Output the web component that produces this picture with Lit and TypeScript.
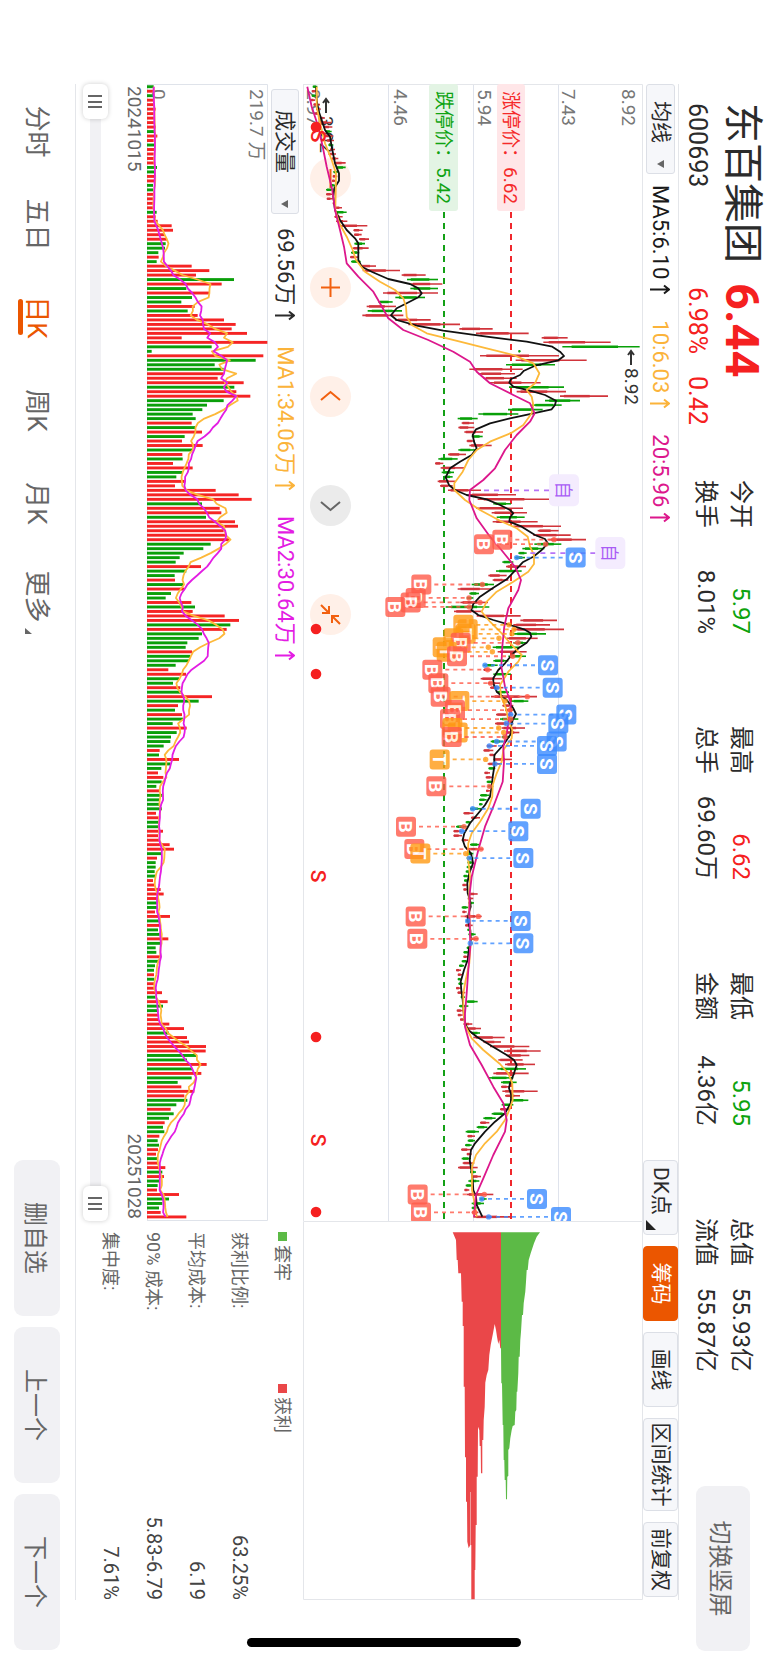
import { LitElement, html, svg, css } from "lit";
import { customElement, state } from "lit/decorators.js";

/* Daily candles: direction (r = up, g = down), low and high in chart thirds. */
const CANDLES = `g38-52 r35-50 g35-48 r32-45 r40-60 r48-62 r45-60 r55-75 r55-95 r70-97 g75-95 r75-100 r80-102
g85-100 r90-105 r85-108 r95-115 r105-137 g108-137 g100-115 r98-112 r96-108 g90-105 g78-100 r78-100 r80-98
r98-108 r105-126 g105-140 r103-128 r108-142 r120-202 r160-188 r162-185 r177-207 g163-195 r158-206 g153-178
r150-175 g153-182 r180-228 r188-300 r305-377 g321-414 r331-427 g331-414 r249-414 g286-375 g235-278 r200-288
g203-306 r187-310 r285-392 r325-480 r478-578 r528-686 r725-803 r730-932 g787-1019 g655-662 r540-777 r647-860
g618-765 r508-668 r535-645 r550-650 r570-722 g627-792 r650-798 r780-924 g735-840 g695-785 g624-728 g535-655
g473-533 r485-522 r475-523 r493-549 g515-548 r500-525 r508-575 g475-525 r444-498 g415-473 r405-430 r422-492
g425-462 g430-458 r413-467 r420-458 r444-543 r505-648 r533-759 g580-633 r528-669 r575-681 g590-674 r578-713
r640-783 r713-776 r700-812 r745-858 g703-784 g667-733 g655-680 g645-675 g607-640 r618-678 g588-665 r565-620
r578-625 g515-582 r473-580 g508-537 g500-520 r481-564 g437-568 r462-545 r530-662 r661-771 r640-750 r640-792
g640-738 r620-713 g640-680 g578-660 r593-680 g625-678 g580-625 g550-593 r550-575 g580-633 r542-606 r563-600
r570-610 g590-627 r573-711 g635-685 r607-640 r615-640 r588-635 g600-655 r585-640 r605-675 r618-658 g605-630
g572-610 r560-590 r550-580 r568-587 r580-636 r563-603 g565-586 r553-570 r557-580 g560-578 g563-580 r558-570
g540-568 g537-560 g537-548 g510-543 r490-520 r513-540 g497-513 g468-500 r460-485 r460-486 r485-505 g510-540
r500-550 g500-520 g500-520 g502-520 g500-518 g497-512 g490-505 g492-505 r487-503 r490-504 r505-533 r503-520
g505-522 g485-505 r487-500 r493-545 g498-510 r495-518 g502-512 g505-527 r510-535 g507-518 g500-512 g490-507
r490-505 g485-503 g477-492 r468-483 r473-487 g473-484 g475-490 r468-482 r472-496 g482-495 g498-533 g477-505
r470-490 r473-488 r480-495 r490-517 r500-543 g513-540 r520-614 r550-603 r570-688 r612-722 r620-688 r595-668
r615-705 g592-678 r580-686 g567-640 g603-650 r603-630 r607-713 r615-660 g630-685 g605-640 r600-630 g575-620
g550-587 r540-568 g530-562 g497-537 r502-525 g503-525 g495-515 r483-513 r500-515 g485-513 r488-523 r474-533
g510-528 r515-543 g505-538 g497-518 r493-508 r500-580 g540-560 g515-552 g515-530 r515-535 r520-635`
  .split(/\s+/)
  .map((t) => {
    const [lo, hi] = t.slice(1).split("-").map(Number);
    return { up: t[0] === "r", lo, hi };
  });

const VOLUMES = `g20 r20 g22 r20 r24 r26 r20 r24 r22 r27 g22 r31 r20 g22 r22 r20 r22 r23 g30 g24 r24 r22 g18 g18 r20
r20 r18 r20 g29 r26 r32 r74 r78 r54 r60 g56 g54 g34 r35 g29 r134 r187 r147 g261 r224 g118 r186 g135 g103 r143
g122 r152 r231 r266 r254 r300 r104 r361 g194 g14 r349 g326 g203 g230 r230 r212 r290 g262 r268 r310 g230 g180
g166 g137 g146 r134 g144 r165 g113 r105 r167 g136 r106 g107 r78 r137 g107 g88 r113 r84 r206 r275 r314 g165
r218 r223 g177 r264 r273 r230 r238 r247 g191 g169 g110 g98 g86 r162 g118 g83 r84 g110 r112 g72 g56 r133 g144
r137 r233 r276 g250 r239 g165 g155 g121 g116 r135 g130 g126 g86 r64 r117 g96 g78 r100 g103 r195 g155 r93 g84
r105 g108 g77 r119 g89 g72 g70 g50 r38 g36 r96 g70 g43 r33 r49 g44 g28 r36 g46 g38 g38 g45 r27 r35 g35 g35
r48 r33 r37 r68 r81 g44 r30 g26 g26 g23 g26 r18 r24 r41 r50 r36 g32 g30 r24 r69 g40 r42 g33 g38 r64 g42 g26
g28 r40 g34 g24 g21 r21 g22 r22 r22 r45 g26 r62 g48 g34 r34 r36 r67 r111 g66 r120 r126 r177 r176 g150 g120
r179 g135 r163 g134 g92 r103 r142 r112 g121 g88 r71 g80 g66 r53 g48 g52 r37 g32 g36 r33 r27 g32 r34 r55 g46
r51 g38 g32 r30 r96 g66 g46 g36 r41 r118`
  .split(/\s+/)
  .map((t) => ({ up: t[0] === "r", size: Number(t.slice(1)) }));

/* Moving averages of the price: position,level pairs. */
const MA5 = `20,48 60,50 90,55 150,75 170,90 200,95 250,105 280,117 302,117 325,103 350,100 390,105 420,120
450,140 475,165 490,175 540,175 560,185 575,215 597,265 612,330 625,355 640,365 652,355 670,320 685,290
706,273 720,290 737,350 752,430 770,560 785,680 800,757 815,780 828,792 841,775 857,705 872,672 885,660
898,632 908,628 920,640 932,690 945,735 962,768 975,765 988,755 1000,700 1015,630 1030,570 1048,528 1065,518
1085,522 1105,530 1125,515 1145,480 1165,450 1192,437 1215,447 1230,465 1245,500 1258,560 1275,600 1290,630
1300,640 1312,630 1325,628 1340,665 1365,705 1377,735 1390,743 1410,725 1430,700 1447,668 1472,645 1498,620
1523,580 1550,540 1572,520 1590,514 1605,535 1620,580 1635,630 1648,672 1658,690 1670,694 1688,680 1705,655
1725,635 1750,615 1770,595 1795,580 1810,580 1835,590 1860,620 1885,640 1902,648 1920,638 1940,633 1960,634
1995,610 2025,583 2060,583 2090,578 2120,575 2150,570 2175,555 2200,535 2230,510 2260,493 2280,488 2300,495
2320,513 2350,519 2380,508 2410,502 2440,503 2460,510 2480,512 2500,506 2520,503 2550,511 2580,513 2610,506
2640,503 2670,492 2705,482 2730,484 2760,488 2800,491 2830,495 2850,505 2870,530 2895,570 2925,620 2940,642
2955,650 2980,642 3010,630 3025,627 3045,634 3070,632 3100,615 3125,585 3155,555 3190,525 3210,513 3240,509
3270,514 3300,518 3330,520 3350,528 3375,530 3410,547`;

const MA10 = `20,50 80,50 130,60 190,75 240,95 280,108 340,107 390,106 430,118 470,140 510,158 540,168 575,195
605,240 630,285 655,310 680,318 710,320 735,335 760,380 785,480 805,560 825,640 850,700 880,718 910,705
930,680 950,695 975,700 1000,695 1035,670 1058,635 1085,570 1110,530 1140,505 1175,488 1210,463 1230,463
1260,495 1290,540 1322,600 1345,650 1370,683 1400,690 1425,702 1452,702 1475,685 1505,640 1535,590 1565,560
1595,545 1625,570 1660,605 1700,640 1725,665 1745,655 1775,625 1815,600 1850,603 1885,618 1920,625 1950,637
1975,635 2010,610 2045,605 2080,590 2115,578 2150,577 2185,565 2225,540 2260,515 2290,505 2330,503 2360,507
2390,510 2440,508 2500,508 2540,510 2590,512 2650,508 2700,497 2740,490 2790,490 2835,495 2875,515 2910,550
2952,600 2980,625 3010,637 3060,638 3090,628 3120,615 3155,590 3190,555 3225,528 3260,516 3330,516 3360,522
3410,530`;

const MA20 = `20,22 80,35 140,55 200,68 260,80 330,97 390,105 450,120 500,132 550,140 590,175 635,220 670,240
715,265 750,310 780,385 815,460 845,510 875,530 910,570 945,640 970,690 1000,704 1025,690 1065,650 1110,615
1165,585 1200,550 1230,510 1260,508 1315,530 1370,570 1405,600 1460,645 1500,663 1530,655 1585,625 1640,613
1700,607 1760,604 1820,615 1870,633 1910,628 1960,620 2000,610 2045,612 2105,608 2180,580 2240,555 2310,535
2390,515 2440,509 2500,508 2560,510 2600,511 2670,505 2740,500 2800,495 2840,495 2895,510 2955,545 3020,580
3070,610 3120,620 3155,615 3225,580 3295,550 3345,528 3410,522`;

/* Trades: kind, candle index, level of the tag, level of the dot. */
const TRADES = `B101:607:762 B102:552:737 S105:827:650 B111:364:547 B114:347:507 B115:332:540 B116:286:508
T120:490:627 T121:503:642 T122:497:636 T123:460:597 B124:482:654 T125:428:565 T126:440:577 B127:471:638
S129:744:555 B130:397:563 B133:415:572 S134:758:590 B136:422:682 T137:478:615 B139:465:630 S140:799:632
B141:450:632 S142:775:619 T143:457:596 T144:473:611 B145:455:615 S146:770:590 S147:741:568 T150:419:557
S151:741:585 B156:409:568 S161:692:518 B165:318:492 S166:655:485 B170:343:543 T171:361:497 S172:670:508
B185:347:535 S186:662:503 B190:352:528 S191:670:511 B247:353:553 S248:711:545 B251:363:524 S252:783:566`
  .split(/\s+/)
  .map((t) => {
    const [i, tag, dot] = t.slice(1).split(":").map(Number);
    return { kind: t[0], i, tag, dot };
  });

/* Outlines of the cost distribution: reach,level pairs. */
const CHIPS_WIN = `97,488 120,498 180,500 180,503 220,505 220,513 305,515 305,518 378,518 378,521 560,521 560,524
772,525 772,528 905,528 905,531 1025,532 1045,536 1035,541 1035,544 1198,544 1198,554 1110,554 1110,556
975,557 975,560 830,560 830,563 680,564 690,568 738,569 738,572 820,573 820,577 720,577 720,580 660,581
620,584 548,586 525,590 510,595 465,598 435,602 400,609 372,614 390,618 410,621 432,625 420,628 445,631
445,633 97,633`;
const CHIPS_LOSS = `97,633 97,750 110,740 130,732 160,722 180,716 210,713 210,710 245,708 275,706 310,701 345,699
345,696 395,693 420,691 470,689 470,686 520,685 575,682 575,680 630,679 635,676 675,674 678,668 690,665
715,661 745,658 750,655 828,655 830,652 898,651 898,648 840,647 840,644 780,643 780,641 675,640 675,638
550,636 550,634 440,633`;

const RED = "#d1343b";
const GREEN = "#08a008";
const STEP = 13.455;
const at = (i: number) => (8 + STEP * i) / 3;
const level = (v: number) => (1029 - v) / 3;
const line = (src: string) =>
  src
    .split(/\s+/)
    .map((p) => {
      const [t, v] = p.split(",").map(Number);
      return `${((t - 12) / 3).toFixed(1)},${level(v).toFixed(1)}`;
    })
    .join(" ");
const area = (src: string) =>
  src
    .split(/\s+/)
    .map((p) => {
      const [t, v] = p.split(",").map(Number);
      return `${((t - 63) / 3).toFixed(1)},${((1059 - v) / 3).toFixed(1)}`;
    })
    .join(" ");
const average = (n: number) =>
  VOLUMES.map((_, i) => {
    const part = VOLUMES.slice(Math.max(0, i - n + 1), i + 1);
    const mean = part.reduce((s, v) => s + v.size, 0) / part.length;
    return `${at(i).toFixed(1)},${(121 - mean / 3).toFixed(1)}`;
  }).join(" ");

const KIND_COLOR: Record<string, string> = { B: "#ff5b49", S: "#3b8bff", T: "#ff9a14" };

@customElement("price-chart")
export class PriceChart extends LitElement {
  static styles = css`
    :host { display: block; position: relative; }
    svg.plot { display: block; width: 100%; height: auto; position: relative; pointer-events: none; }
    text { font-family: Roboto, "Noto Sans CJK SC", sans-serif; }
    .axis { font-size: 19px; fill: #777; }
    .mark { font-size: 19px; fill: #333; }
    .limit { font-size: 19px; }
    .tag { font-size: 19px; font-weight: 700; fill: #fff; text-anchor: middle; }
    .self { font-size: 18px; fill: #a95cf5; text-anchor: middle; }
    .dk { font-size: 21px; font-weight: 500; fill: #f52020; text-anchor: middle; }
    .tools { position: absolute; left: 74px; bottom: 7px; display: flex; gap: 68px; }
    button { width: 41px; height: 41px; border: 0; padding: 0; border-radius: 50%; background: #fff0e8; color: #f2600f; }
    button svg { display: block; width: 41px; height: 41px; fill: none; stroke: currentColor; stroke-width: 2; }
    button.off { background: #ebebeb; color: #666; }
  `;

  render() {
    const tools = [
      ["缩小", "M11 20.5H30"],
      ["放大", "M11 20.5H30M20.5 11V30"],
      ["左移", "M24 11L16 20.5L24 30"],
      ["右移", "M17 11L25 20.5L17 30"],
      ["收起", "M11 30L19 22M12 22H19V29M30 11L22 19M22 12V19H29"],
    ];
    return html`
      <div class="tools">
        ${tools.map(
          ([name, d], i) => html`<button class=${i === 3 ? "off" : ""} aria-label=${name}>
            <svg viewBox="0 0 41 41"><path d=${d} /></svg>
          </button>`
        )}
      </div>
      <svg class="plot" viewBox="0 0 1137 340">
        ${[84.5, 169.5, 254.5].map((y) => svg`<path d="M0 ${y}H1137" stroke="#dfe3ec" />`)}
        <path d="M0.5 340V0.5H1137M0 339.5H1137" stroke="#e4e6ea" fill="none" />
        <text class="axis" x="5" y="21">8.92</text>
        <text class="axis" x="5" y="81">7.43</text>
        <text class="axis" x="5" y="165">5.94</text>
        <text class="axis" x="5" y="249">4.46</text>
        <text class="axis" x="5" y="336">2.97</text>
        <rect x="0" y="118" width="127" height="28" rx="3" fill="#ffe6e8" />
        <text class="limit" x="7" y="139" fill="#f52a2a">涨停价：6.62</text>
        <path d="M128 132H1137" stroke="#f0282d" stroke-width="2" stroke-dasharray="6 5" />
        <rect x="0" y="185" width="127" height="29" rx="3" fill="#e3f4e4" />
        <text class="limit" x="7" y="206" fill="#0fa312">跌停价：5.42</text>
        <path d="M128 199H1137" stroke="#13a016" stroke-width="2" stroke-dasharray="6 5" />
        <path d="M15 317H29M19 314L15 317L19 320" stroke="#333" stroke-width="2" fill="none" />
        <text class="mark" x="32" y="323">3.02</text>
        <path d="M267 12H281M271 9L267 12L271 15" stroke="#333" stroke-width="2" fill="none" />
        <text class="mark" x="284" y="18">8.92</text>
        ${CANDLES.map((c, i) => {
          const x = at(i);
          const h = c.hi - c.lo;
          const a = c.lo + h * (c.up ? 0.08 : 0.12);
          const b = c.lo + h * (c.up ? 0.62 : 0.72);
          const color = c.up ? RED : GREEN;
          return svg`<path d="M${x} ${level(c.lo)}V${level(c.hi)}" stroke=${color} stroke-width="1.6" />
            <path d="M${x} ${level(a)}V${level(b)}" stroke=${color} stroke-width="2.5" />`;
        })}
        <g fill="none" stroke-width="1.8" stroke-linejoin="round">
          <polyline points=${line(MA5)} stroke="#111" />
          <polyline points=${line(MA10)} stroke="#fdb93a" />
          <polyline points=${line(MA20)} stroke="#dc178c" />
        </g>
        ${[[90, 792, 543], [104, 931, 680]].map(
          ([i, tag, end]) => svg`
            <path d="M${at(i)} ${level(tag - 45)}V${level(end)}" stroke="#b673f7" stroke-width="1.8" stroke-dasharray="5 5" />
            <rect x=${at(i) - 16} y=${level(tag) - 15} width="32" height="30" rx="5" fill="#f4ecfe" />
            <text class="self" x=${at(i)} y=${level(tag) + 7}>自</text>`
        )}
        ${TRADES.map((t) => {
          const x = at(t.i);
          const y = level(t.tag);
          const color = KIND_COLOR[t.kind];
          const near = y + (t.tag > t.dot ? 13 : -13);
          return svg`
            <path d="M${x} ${near}V${level(t.dot)}" stroke=${color} stroke-width="1.8" stroke-dasharray="4 4" opacity="0.8" />
            <circle cx=${x} cy=${level(t.dot)} r="2.7" fill=${color} opacity="0.8" />
            <g opacity="0.8">
              <rect x=${x - 10} y=${y - 10} width="20" height="20" rx="3" fill=${color} />
              <text class="tag" x=${x} y=${y + 7}>${t.kind}</text>
            </g>`;
        })}
        ${[43, 545, 590, 953, 1128].map((x) => svg`<circle cx=${x} cy="327" r="5.3" fill="#f52020" />`)}
        ${[52, 792, 1056].map((x) => svg`<text class="dk" x=${x} y="332">S</text>`)}
      </svg>
    `;
  }
}

@customElement("volume-chart")
export class VolumeChart extends LitElement {
  static styles = css`
    :host { display: block; }
    svg { display: block; width: 100%; height: auto; }
    text { font-family: Roboto, "Noto Sans CJK SC", sans-serif; font-size: 19px; fill: #777; }
  `;

  render() {
    return html`<svg viewBox="0 0 1137 121">
      <path d="M0.5 121V0.5H1136.5V121M0 120.5H1137" stroke="#dfe3ea" fill="none" />
      ${VOLUMES.map(
        (v, i) => svg`<rect x=${at(i) - 1.4} y=${121 - v.size / 3} width="2.9" height=${v.size / 3}
          fill=${v.up ? "#f52424" : "#0a9f0a"} />`
      )}
      <text x="5" y="18">219.7 万</text>
      <text x="5" y="116">0</text>
      <g fill="none" stroke-width="1.8" stroke-linejoin="round">
        <polyline points=${average(5)} stroke="#fdb93a" />
        <polyline points=${average(10)} stroke="#e31de3" />
      </g>
    </svg>`;
  }
}

@customElement("app-root")
export class AppRoot extends LitElement {
  @state() private tab = 2;

  static styles = css`
    :host { display: block; width: 100vw; height: 100vh; overflow: hidden; background: #fff; }
    .screen {
      width: 100vh; height: 100vw; box-sizing: border-box; position: relative;
      transform-origin: 0 0; transform: rotate(90deg) translateY(-100%);
      display: flex; flex-direction: column;
      font-family: Roboto, "Noto Sans CJK SC", sans-serif; font-size: 22px; color: #2b2b2b;
    }
    button, select { font: inherit; color: inherit; margin: 0; }
    .up { color: #f52020; }
    .down { color: #0da30d; }

    .head { display: flex; height: 89px; flex: none; padding: 0 11px 0 103px; }
    .ident { display: grid; grid-template-columns: auto 1fr; grid-template-rows: 52px 38px; column-gap: 20px; width: 377px; align-items: center; white-space: nowrap; }
    .name { font-size: 40px; line-height: 52px; margin: 0; font-weight: 400; }
    .price { font-size: 47px; line-height: 52px; font-weight: 700; }
    .code, .change { font-size: 25px; line-height: 38px; }
    .change { display: flex; gap: 22px; padding-left: 4px; }
    .quotes { display: grid; grid-template-columns: repeat(4, 154px); grid-auto-rows: 35px; column-gap: 92px; margin: 10px 0 0; font-size: 24px; line-height: 35px; }
    .quote { display: flex; justify-content: space-between; white-space: nowrap; }
    .quote dd { margin: 0; }
    .rotate { margin: 18px 0 0 auto; width: 165px; height: 54px; }
    .soft { border: 0; border-radius: 9px; background: #f1f1f4; color: #666; font-size: 24px; padding: 0; }

    .bar { display: flex; align-items: center; height: 36px; flex: none; margin: 0 62px 0 84px; border-top: 1px solid #e4e6ea; box-sizing: border-box; }
    .pick { position: relative; display: inline-flex; }
    .pick::after { content: ""; position: absolute; right: 6px; top: 11px; border: 4px solid transparent; border-top: 7px solid #666; border-bottom: 0; pointer-events: none; }
    .pick select { appearance: none; height: 29px; width: 90px; padding: 0 0 0 16px; border: 1px solid #dcdfe6; border-radius: 3px; background: #f6f7fa; font-size: 21px; line-height: 27px; }
    .pick.wide select { width: 125px; height: 28px; padding-left: 20px; }
    .legend { display: flex; gap: 25px; margin-left: 11px; white-space: nowrap; line-height: 28px; }
    .arrow { display: inline-block; width: 11px; height: 20px; margin-left: 5px; vertical-align: -3px; fill: none; stroke: currentColor; stroke-width: 2; }
    .ma5 { color: #1a1a1a; } .ma10 { color: #fbb33a; } .ma20 { color: #dc178c; } .v2 { color: #e31de3; }
    .actions { margin-left: auto; display: flex; gap: 11px; padding-right: 3px; }
    .act { position: relative; min-width: 75px; height: 35px; padding: 0 3px; box-sizing: border-box; border: 1px solid #dcdfe6; border-radius: 4px; background: #f6f7fa; font-size: 21px; line-height: 31px; white-space: nowrap; }
    .act.on { background: #eb5600; border-color: #eb5600; color: #fff; }
    .act.four { min-width: 93px; }
    .act.menu { text-align: left; padding-left: 6px; }
    .act.menu::after { content: ""; position: absolute; right: 4px; bottom: 2px; border-left: 10px solid transparent; border-bottom: 10px solid #222; }

    .main { display: grid; grid-template-columns: 3fr 1fr; margin: 0 62px 0 84px; flex: 1; border-bottom: 1px solid #e4e6ea; min-height: 0; }
    .main > * { min-width: 0; }
    .vbar { display: flex; align-items: center; height: 35px; padding-left: 5px; }
    .vbar .legend { margin-left: 14px; gap: 25px; }
    .dates { display: flex; justify-content: space-between; font-size: 19px; line-height: 26px; color: #666; padding: 0 2px; }
    .range { display: grid; align-items: center; margin-top: 13px; height: 25px; background: linear-gradient(#f1f1f4, #f1f1f4) center / 100% 11px no-repeat; }
    .range input { grid-area: 1 / 1; appearance: none; width: 100%; height: 25px; margin: 0; background: none; pointer-events: none; }
    .range input::-webkit-slider-thumb {
      appearance: none; pointer-events: auto; width: 35px; height: 25px; border-radius: 6px; box-shadow: 0 0 5px #0003;
      background:
        linear-gradient(#666, #666) 11px 6px / 2px 14px no-repeat,
        linear-gradient(#666, #666) 17px 6px / 2px 14px no-repeat,
        linear-gradient(#666, #666) 22px 6px / 2px 14px no-repeat, #fff;
    }

    .chips svg { display: block; width: 100%; height: auto; }
    .keys { display: grid; grid-template-columns: 152px 1fr; padding: 0 0 0 11px; height: 38px; align-items: center; font-size: 18px; color: #666; }
    .key::before { content: ""; display: inline-block; width: 9px; height: 9px; margin-right: 4px; vertical-align: 2px; background: #5cba46; }
    .key.win::before { background: #ea4749; }
    .stats { margin: 4px 0 0; padding-left: 11px; }
    .stat { display: flex; justify-content: space-between; line-height: 43px; font-size: 18px; color: #666; }
    .stat dd { margin: 0; font-size: 20px; color: #444; }

    .foot { display: flex; align-items: center; height: 75px; flex: none; padding: 0 12px 0 85px; }
    .tabs { display: grid; grid-auto-flow: column; grid-auto-columns: 93px; }
    .tab { position: relative; border: 0; background: none; padding: 0; height: 46px; line-height: 46px; font-size: 26px; color: #666; }
    .tab.on { color: #eb5600; }
    .tab.on::after { content: ""; position: absolute; left: 28px; bottom: 4px; width: 36px; height: 5px; border-radius: 3px; background: #eb5600; }
    .tab.more::after { content: ""; position: absolute; right: 9px; bottom: 11px; border-left: 6px solid transparent; border-bottom: 7px solid #666; }
    .moves { display: flex; gap: 11px; margin-left: auto; }
    .moves button { width: 156px; height: 46px; }
    .home { position: absolute; right: 15px; top: 247px; bottom: 247px; width: 9px; border-radius: 5px; background: #000; }
  `;

  private arrow() {
    return html`<svg class="arrow" viewBox="0 0 11 20" aria-label="上升"><path d="M5.5 20V1M1.5 6L5.5 1L9.5 6" /></svg>`;
  }

  render() {
    const quotes: [string, string, string][] = [
      ["今开", "5.97", "down"], ["最高", "6.62", "up"], ["最低", "5.95", "down"], ["总值", "55.93亿", ""],
      ["换手", "8.01%", ""], ["总手", "69.60万", ""], ["金额", "4.36亿", ""], ["流值", "55.87亿", ""],
    ];
    const stats = [["获利比例:", "63.25%"], ["平均成本:", "6.19"], ["90% 成本:", "5.83-6.79"], ["集中度:", "7.61%"]];
    const tabs = ["分时", "五日", "日K", "周K", "月K", "更多"];
    return html`
      <div class="screen">
        <header class="head">
          <div class="ident">
            <h1 class="name">东百集团</h1>
            <span class="price up">6.44</span>
            <span class="code">600693</span>
            <span class="change up"><span>6.98%</span><span>0.42</span></span>
          </div>
          <dl class="quotes">
            ${quotes.map(([k, v, c]) => html`<div class="quote"><dt>${k}</dt><dd class=${c}>${v}</dd></div>`)}
          </dl>
          <button class="soft rotate">切换竖屏</button>
        </header>

        <div class="bar">
          <label class="pick"><select aria-label="主图指标"><option>均线</option></select></label>
          <div class="legend">
            <span class="ma5">MA5:6.10${this.arrow()}</span>
            <span class="ma10">10:6.03${this.arrow()}</span>
            <span class="ma20">20:5.96${this.arrow()}</span>
          </div>
          <div class="actions">
            <button class="act menu">DK点</button>
            <button class="act on">筹码</button>
            <button class="act">画线</button>
            <button class="act four">区间统计</button>
            <button class="act">前复权</button>
          </div>
        </div>

        <main class="main">
          <section>
            <price-chart></price-chart>
            <div class="vbar">
              <label class="pick wide"><select aria-label="副图指标"><option>成交量</option></select></label>
              <div class="legend">
                <span>69.56万${this.arrow()}</span>
                <span class="ma10">MA1:34.06万${this.arrow()}</span>
                <span class="v2">MA2:30.64万${this.arrow()}</span>
              </div>
            </div>
            <volume-chart></volume-chart>
            <div class="dates"><span>20241015</span><span>20251028</span></div>
            <div class="range">
              <input type="range" aria-label="开始日期" min="0" max="252" value="0" />
              <input type="range" aria-label="结束日期" min="0" max="252" value="252" />
            </div>
          </section>
          <aside class="chips">
            <svg viewBox="0 0 379 340">
              <path d="M0.5 0.5H378.5V339.5H0.5Z" stroke="#e4e6ea" fill="none" />
              <polygon points=${area(CHIPS_LOSS)} fill="#5cba46" />
              <polygon points=${area(CHIPS_WIN)} fill="#ea4749" />
              <path d="M271 172.5H324" stroke="#f29a9b" />
            </svg>
            <div class="keys"><span class="key">套牢</span><span class="key win">获利</span></div>
            <dl class="stats">
              ${stats.map(([k, v]) => html`<div class="stat"><dt>${k}</dt><dd>${v}</dd></div>`)}
            </dl>
          </aside>
        </main>

        <footer class="foot">
          <nav class="tabs">
            ${tabs.map(
              (t, i) => html`<button
                class="tab ${i === this.tab ? "on" : ""} ${i === 5 ? "more" : ""}"
                @click=${() => (this.tab = i)}
              >${t}</button>`
            )}
          </nav>
          <div class="moves">
            <button class="soft">删自选</button>
            <button class="soft">上一个</button>
            <button class="soft">下一个</button>
          </div>
        </footer>
        <div class="home"></div>
      </div>
    `;
  }
}
